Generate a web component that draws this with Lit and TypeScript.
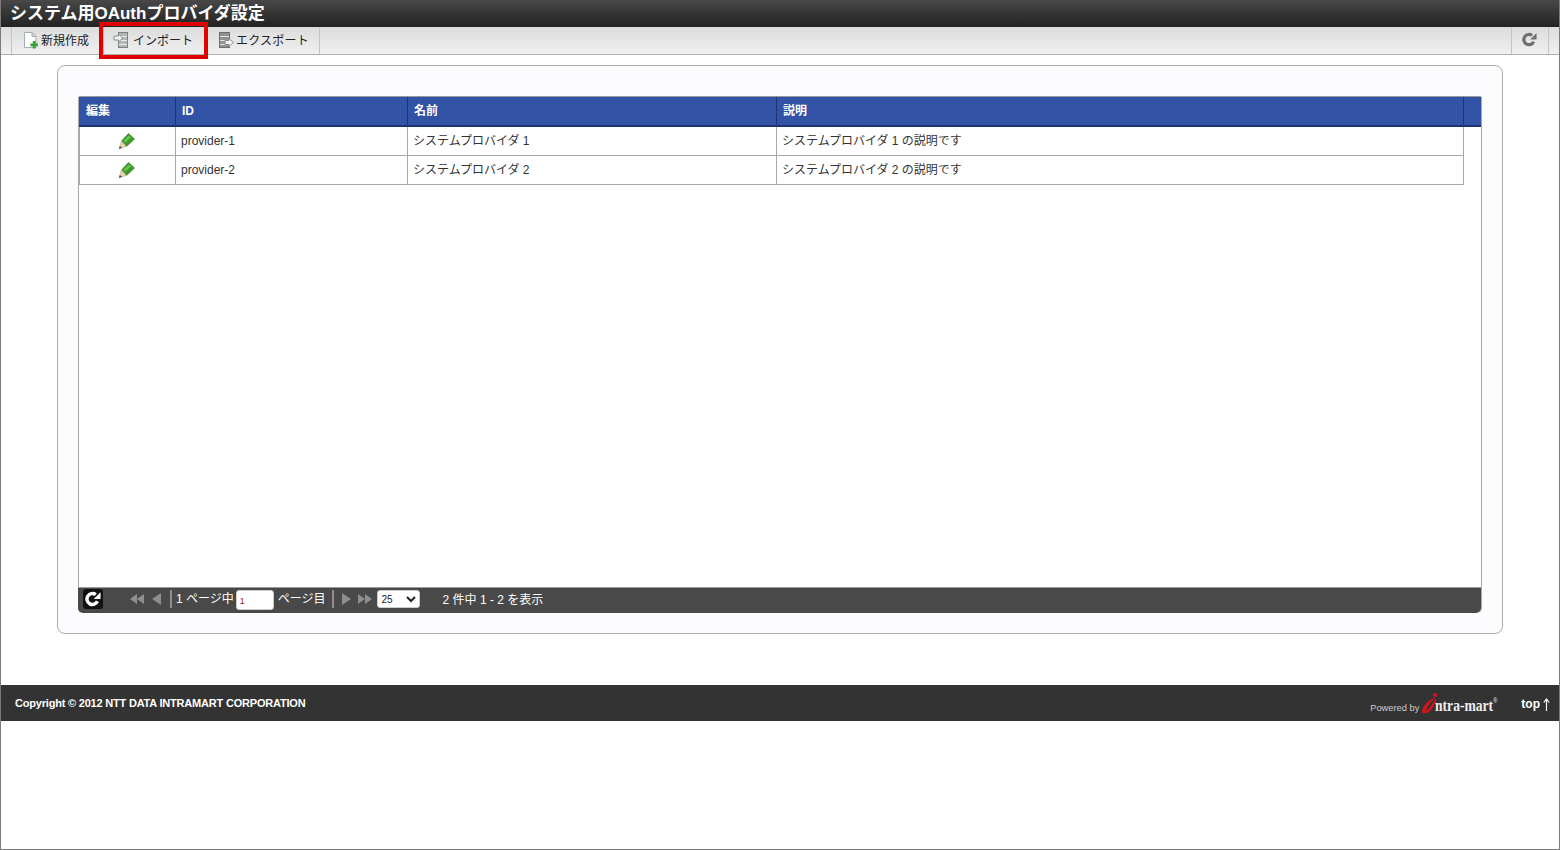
import { LitElement, html, css, svg } from "lit";
import { customElement } from "lit/decorators.js";

const FONT = css`"Liberation Sans", "Noto Sans CJK JP", sans-serif`;

const pencil = svg`<svg class="pencil" width="18" height="18" viewBox="0 0 18 18">
  <path d="M10.5 1.5 16.5 7 8.5 14.5 3.5 9Z" fill="#3f9a2e" stroke="#2f7f22" stroke-width=".7"/>
  <path d="M5.5 8.8 11 3.4 13 5.2 7.4 10.6Z" fill="#6cc34e"/>
  <path d="M3.5 9 8.5 14.5 1 16.8Z" fill="#e6d3aa" stroke="#a99a80" stroke-width=".5"/>
  <path d="M1 16.8 1.9 14 4 16Z" fill="#444"/>
</svg>`;

const newIcon = svg`<svg width="16" height="18" viewBox="0 0 16 18">
  <path d="M1.5 1.5H9L13 5.5V16.5H1.5Z" fill="#fff" stroke="#a3adb4"/>
  <path d="M9 1.5V5.5H13Z" fill="#dfe4e7" stroke="#a3adb4"/>
  <path d="M9.8 10h2.8v2.4H15v2.8h-2.4v2.4H9.8v-2.4H7.4v-2.8h2.4Z" fill="#34a530"/>
</svg>`;

const importIcon = svg`<svg width="16" height="18" viewBox="0 0 16 18">
  <rect x="5.5" y="1.5" width="9" height="15" fill="#b5b9b5" stroke="#7f837f"/>
  <path d="M6 5.5H14M6 9.5H14M6 13.5H14" stroke="#eceeec"/>
  <path d="M1 5H5.5V3L10 7 5.5 11V9H1Z" fill="#f1f3f0" stroke="#7f837f" stroke-width=".9"/>
</svg>`;

const exportIcon = svg`<svg width="16" height="18" viewBox="0 0 16 18">
  <rect x="1.5" y="1.5" width="10" height="15" fill="#8f928f" stroke="#6d6f6d"/>
  <path d="M2 5.5H11M2 9.5H11M2 13.5H11" stroke="#e3e5e3"/>
  <path d="M7 9.5H11V7.5L15.5 11.5 11 15.5V13.5H7Z" fill="#f1f3f0" stroke="#7f837f" stroke-width=".9"/>
</svg>`;

const refresh = (color: string, size: number) => svg`<svg width=${size} height=${size} viewBox="0 0 14 14">
  <path d="M10.9 9A4.8 4.8 0 1 1 9.4 3.2" fill="none" stroke=${color} stroke-width="3"/>
  <path d="M7.6 7 13.6 7 13.6 1Z" fill=${color}/>
</svg>`;

const tri = (dir: "l" | "r") => svg`<svg width="9" height="12" viewBox="0 0 9 12">
  <path d=${dir === "l" ? "M9 0V12L0 6Z" : "M0 0V12L9 6Z"} fill="#8e8e8e"/>
</svg>`;
const dbl = (dir: "l" | "r") => svg`<svg width="14" height="10" viewBox="0 0 14 10">
  <path d=${dir === "l" ? "M7 0V10L0 5ZM14 0V10L7 5Z" : "M0 0V10L7 5ZM7 0V10L14 5Z"} fill="#8e8e8e"/>
</svg>`;

@customElement("app-root")
export class AppRoot extends LitElement {
  static styles = css`
    :host {
      display: block;
      width: 1560px;
      height: 850px;
      box-sizing: border-box;
      border: 1px solid #7b7b7b;
      border-top: none;
      background: #fff;
      font: 12px ${FONT};
      color: #333;
      position: relative;
      overflow: hidden;
    }
    .title {
      height: 27px;
      margin-left: -1px;
      margin-right: -1px;
      box-sizing: border-box;
      padding: 2px 0 0 10px;
      background: linear-gradient(#484848, #222);
      color: #fff;
      font-size: 17px;
      font-weight: bold;
      line-height: 23px;
      white-space: nowrap;
    }
    .toolbar {
      height: 28px;
      box-sizing: border-box;
      display: flex;
      justify-content: space-between;
      padding: 0 10px;
      background: linear-gradient(#dcdcdc, #f0f0f0);
      border-bottom: 1px solid #b0b0b0;
    }
    .tools, .tools-right {
      display: flex;
      border-left: 1px solid #c4c4c4;
    }
    .tool {
      display: flex;
      align-items: center;
      box-sizing: border-box;
      height: 27px;
      border-right: 1px solid #c4c4c4;
      color: #222;
      white-space: nowrap;
      padding-bottom: 2px;
    }
    .tool svg { flex: none; }
    .tool.new { width: 92px; padding-left: 11px; gap: 2px; }
    .tool.imp { width: 104px; padding-left: 9px; gap: 4px; }
    .tool.exp { width: 112px; padding-left: 10px; gap: 2px; letter-spacing: 0.2px; }
    .tool.reload { width: 37px; justify-content: center; padding-right: 2px; }
    .highlight {
      position: absolute;
      left: 98px;
      top: 22px;
      width: 109px;
      height: 37px;
      box-sizing: border-box;
      border: 4px solid #e00000;
      pointer-events: none;
    }
    .content {
      padding: 10px 56px 0;
    }
    .panel {
      height: 569px;
      box-sizing: border-box;
      padding: 30px 20px 20px;
      background: #fcfcff;
      border: 1px solid #ababab;
      border-radius: 8px;
    }
    .grid {
      height: 517px;
      box-sizing: border-box;
      display: flex;
      flex-direction: column;
      background: #fff;
      border: 1px solid #a8a8a8;
      border-top-color: #999;
      border-bottom: none;
      border-radius: 2px 2px 5px 5px;
    }
    .row {
      display: grid;
      grid-template-columns: 97px 232px 369px 687px 17px;
    }
    .head {
      height: 30px;
      box-sizing: border-box;
      background: #3252a5;
      border-bottom: 2px solid #1f3272;
      color: #fff;
      font-weight: bold;
      line-height: 28px;
    }
    .head > div {
      box-sizing: border-box;
      height: 28px;
      padding-left: 6px;
      border-right: 1px solid #1f3272;
    }
    .head > div:first-child { padding-left: 7px; }
    .head > div:last-child { border-right: none; }
    .body { flex: 1; min-height: 0; }
    .data {
      grid-template-columns: 96px 232px 369px 687px;
      width: 1385px;
      box-sizing: border-box;
      height: 29px;
      border-left: 1px solid #a8a8a8;
      border-bottom: 1px solid #a8a8a8;
      line-height: 28px;
    }
    .data > div {
      box-sizing: border-box;
      height: 28px;
      padding-left: 5px;
      border-right: 1px solid #a8a8a8;
      white-space: nowrap;
    }
    .data > .edit {
      padding: 5px 0 0 38px;
      display: block;
    }
    .pencil { display: block; }
    .pager {
      height: 26px;
      flex: none;
      margin: 0 0 0 -1px;
      display: flex;
      align-items: center;
      box-sizing: border-box;
      padding-bottom: 3px;
      background: #494949;
      border-top: 1px solid #9a9a9a;
      border-radius: 0 0 5px 5px;
      color: #fff;
      white-space: nowrap;
    }
    .reload-btn {
      width: 20px;
      height: 20px;
      margin-left: 5px;
      background: #111;
      border-radius: 3px;
      display: flex;
      align-items: center;
      justify-content: center;
      flex: none;
    }
    .pg { display: flex; align-items: center; flex: none; }
    .first { margin-left: 27px; }
    .prev { margin-left: 8px; }
    .sep {
      width: 2px;
      height: 18px;
      background: #8f8f8f;
      flex: none;
    }
    .sep.a { margin-left: 9px; }
    .txt1 { margin-left: 4px; position: relative; top: -2px; }
    .page-input {
      width: 38px;
      height: 20px;
      margin-left: 2px;
      box-sizing: border-box;
      border: 1px solid #ccc;
      border-radius: 3px;
      background: #fff;
      color: #a02020;
      font: 9px ${FONT};
      padding: 1px 0 0 3px;
      outline: none;
      position: relative;
      top: 1px;
    }
    .txt2 { margin-left: 4px; position: relative; top: -2px; }
    .sep.b { margin-left: 6px; }
    .next { margin-left: 8px; }
    .last { margin-left: 7px; }
    .size {
      width: 43px;
      height: 18px;
      margin-left: 5px;
      box-sizing: border-box;
      border: 1px solid #ccc;
      border-radius: 3px;
      background: #fff;
      color: #222;
      font: 10px ${FONT};
      padding: 0;
      flex: none;
    }
    .count { margin-left: 23px; position: relative; top: -1px; }
    .footer {
      margin: 51px -1px 0;
      height: 36px;
      background: #333;
      color: #fff;
      display: flex;
      align-items: center;
      position: relative;
    }
    .copyright {
      margin-left: 15px;
      font-size: 11px;
      font-weight: bold;
      letter-spacing: -0.2px;
    }
    .right {
      margin-left: auto;
      display: flex;
      align-items: center;
      position: relative;
    }
    .powered {
      font-size: 9.3px;
      color: #ccc;
      position: relative;
      top: 5px;
    }
    .logo {
      position: relative;
      width: 76px;
      height: 24px;
      flex: none;
    }
    .logo svg { position: absolute; left: 0; top: 0; }
    .logo .word {
      position: absolute;
      left: 16px;
      top: 6px;
      display: block;
      font: bold 17px/18px "Liberation Serif", serif;
      color: #eee;
      transform: scaleX(0.8);
      transform-origin: left center;
      white-space: nowrap;
    }
    .logo sup {
      font: 7px/7px "Liberation Sans", sans-serif;
      vertical-align: 8px;
    }
    .top {
      margin: 0 10px 0 26px;
      font-weight: bold;
      position: relative;
      top: 1px;
      display: flex;
      align-items: center;
      gap: 3px;
    }
    .top svg { flex: none; }
  `;

  render() {
    const rows = [
      ["provider-1", "システムプロバイダ 1", "システムプロバイダ 1 の説明です"],
      ["provider-2", "システムプロバイダ 2", "システムプロバイダ 2 の説明です"],
    ];
    return html`
      <div class="title">システム用OAuthプロバイダ設定</div>
      <div class="toolbar">
        <div class="tools">
          <div class="tool new">${newIcon}<span>新規作成</span></div>
          <div class="tool imp">${importIcon}<span>インポート</span></div>
          <div class="tool exp">${exportIcon}<span>エクスポート</span></div>
        </div>
        <div class="tools-right">
          <div class="tool reload">${refresh("#6f6f6f", 15)}</div>
        </div>
      </div>
      <div class="highlight"></div>
      <div class="content">
        <div class="panel">
          <div class="grid">
            <div class="row head">
              <div>編集</div><div>ID</div><div>名前</div><div>説明</div><div></div>
            </div>
            <div class="body">
              ${rows.map(
                (r) => html`<div class="row data">
                  <div class="edit">${pencil}</div>
                  <div>${r[0]}</div><div>${r[1]}</div><div>${r[2]}</div>
                </div>`
              )}
            </div>
            <div class="pager">
              <div class="reload-btn">${refresh("#fff", 16)}</div>
              <div class="pg first">${dbl("l")}</div>
              <div class="pg prev">${tri("l")}</div>
              <div class="sep a"></div>
              <span class="txt1">1 ページ中</span>
              <input class="page-input" .value=${"1"} />
              <span class="txt2">ページ目</span>
              <div class="sep b"></div>
              <div class="pg next">${tri("r")}</div>
              <div class="pg last">${dbl("r")}</div>
              <select class="size"><option>25</option><option>50</option><option>100</option></select>
              <span class="count">2 件中 1 - 2 を表示</span>
            </div>
          </div>
        </div>
      </div>
      <div class="footer">
        <span class="copyright">Copyright © 2012 NTT DATA INTRAMART CORPORATION</span>
        <div class="right">
          <span class="powered">Powered by</span>
          <div class="logo">
            <svg width="24" height="24" viewBox="0 0 24 24">
              <circle cx="16" cy="4" r="2" fill="#d8131c"/>
              <path d="M3 21C4 14 10 8 17 6.5 12 10 8 15 7 20 10 18 13 14 16 8.5L17.5 9C15 15 12 21 7 22 4 22.6 3 22 3 21Z" fill="#d8131c"/>
            </svg>
            <span class="word">ntra-mart<sup>®</sup></span>
          </div>
          <div class="top">top
            <svg width="7" height="13" viewBox="0 0 7 13"><path d="M3.5 13V2M.8 4.5 3.5 1 6.2 4.5" fill="none" stroke="#fff" stroke-width="1.2"/></svg>
          </div>
        </div>
      </div>
    `;
  }
}
